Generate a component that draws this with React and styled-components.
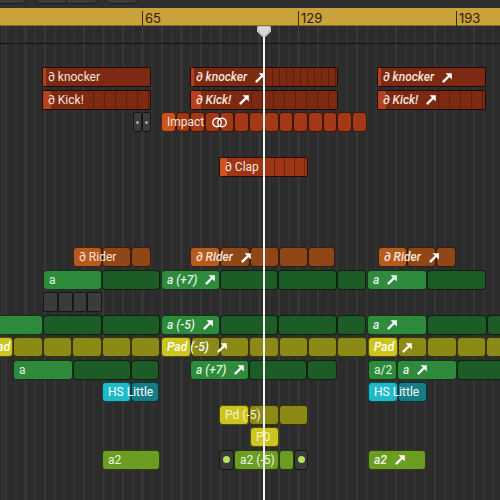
import React from 'react';
import styled, { createGlobalStyle, css } from 'styled-components';

const Global = createGlobalStyle`
  html, body { margin: 0; padding: 0; background: #2c2c2c; }
  body { font-family: Inter, "Liberation Sans", sans-serif; overflow: hidden; }
`;

const PAL = {
  red: { light: '#b6421c', dark: '#7c2a12', text: '#f7e4dc', line: 'rgba(40,8,2,0.35)' },
  clap: { light: '#d1501f', dark: '#9e3515', text: '#f7e4dc', line: 'rgba(40,8,2,0.4)' },
  impact: { light: '#cc521f', dark: '#a23815', text: '#f7e4dc' },
  rider: { light: '#b55b1f', dark: '#8f4718', text: '#f5e6dc' },
  green: { light: '#2d8b3b', dark: '#1d5b27', text: '#e2f3e2' },
  pad: { light: '#cdc51d', dark: '#8c8a17', text: '#ffffff' },
  cyan: { light: '#1fb9c7', dark: '#137e87', text: '#ffffff' },
  lime: { light: '#6b9d23', dark: '#6b9d23', text: '#eef6e2' },
  gray: { light: '#3b3b3b', dark: '#3b3b3b', text: '#fff' },
};

const Screen = styled.div`
  position: relative;
  width: 500px;
  height: 500px;
  overflow: hidden;
  display: flex;
  flex-direction: column;
  background: #2c2c2c;
`;

const TopBar = styled.div`
  height: 8px;
  flex-shrink: 0;
  background: #2f2f2f;
  display: flex;
  gap: 9px;
  align-items: flex-start;
`;

const ToolButton = styled.div`
  width: ${p => p.$w}px;
  margin-left: ${p => p.$ml || 0}px;
  height: 4px;
  box-sizing: border-box;
  background: #3a3a3a;
  border: 1px solid #1e1e1e;
  border-top: none;
  border-radius: 0 0 4px 4px;
  display: flex;
  justify-content: center;
`;

const ButtonDivider = styled.span`
  width: 1px;
  height: 100%;
  background: #1e1e1e;
`;

const Ruler = styled.div`
  position: relative;
  height: 18px;
  flex-shrink: 0;
  background: #c9a23b;
  box-shadow: inset 0 -1px 0 #8a6c22;
`;

const RulerMark = styled.div`
  position: absolute;
  left: ${p => p.$x}px;
  top: 3px;
  bottom: 0;
  border-left: 1px solid #3b2c0e;
  padding-left: 2px;
  font-size: 13px;
  line-height: 14px;
  color: #2a2008;
  font-weight: 400;
`;

const Arrange = styled.div`
  position: relative;
  flex: 1;
  display: flex;
  flex-direction: column;
  background-color: #2c2c2c;
  background-image:
    repeating-linear-gradient(90deg, #3d3d3d 0 1px, transparent 1px 39px),
    repeating-linear-gradient(90deg, #393939 0 1px, transparent 1px 9.75px);
  background-position: 5.5px 0, 5.5px 0;
`;

const GlobalLane = styled.div`
  height: 17px;
  flex-shrink: 0;
  border-bottom: 1px solid #141414;
`;

const Lane = styled.div`
  position: relative;
  height: 22.5px;
  flex-shrink: 0;
`;

const Clip = styled.div`
  position: absolute;
  top: 0.5px;
  left: ${p => p.$x}px;
  height: 20px;
  display: flex;
`;

const Seg = styled.div`
  position: relative;
  width: ${p => p.$w}px;
  height: 100%;
  box-sizing: border-box;
  background: ${p => p.$bg};
  border: 1px solid rgba(0, 0, 0, 0.6);
  border-radius: ${p => p.$r}px;
  display: flex;
  align-items: center;
  justify-content: center;
  flex-shrink: 0;
`;

const LoopClip = styled.div`
  position: absolute;
  top: 0.5px;
  left: ${p => p.$x}px;
  width: ${p => p.$w}px;
  height: 20px;
  box-sizing: border-box;
  border: 1px solid rgba(20, 4, 0, 0.85);
  border-radius: 2px;
  background-color: ${p => p.$bg};
  overflow: hidden;
`;

const Accent = styled.div`
  position: absolute;
  left: 0;
  top: 0;
  bottom: 0;
  width: ${p => p.$w}px;
  background: ${p => p.$bg};
`;

const LoopLines = styled.div`
  position: absolute;
  left: ${p => p.$from}px;
  top: 0;
  bottom: 0;
  right: 0;
  background-image: repeating-linear-gradient(90deg, ${p => p.$c} 0 1px, transparent 1px ${p => p.$step}px);
`;

const Label = styled.div`
  position: absolute;
  left: 5px;
  top: 0;
  height: 100%;
  display: flex;
  align-items: center;
  gap: 8px;
  white-space: nowrap;
  z-index: 2;
  font-family: Roboto, "Liberation Sans", sans-serif;
  font-size: 12px;
  font-weight: 400;
  color: ${p => p.$c};
  font-style: ${p => (p.$it ? 'italic' : 'normal')};
  pointer-events: none;
  ${p => p.$it && css`font-weight: 500;`}
`;

const Dot = styled.span`
  width: ${p => p.$s}px;
  height: ${p => p.$s}px;
  border-radius: 50%;
  background: ${p => p.$c};
`;

const PlayLine = styled.div`
  position: absolute;
  left: 263px;
  top: 26px;
  bottom: 0;
  width: 2px;
  background: #f4f4f4;
  z-index: 10;
`;

const PlayHead = styled.svg`
  position: absolute;
  left: 257px;
  top: 26px;
  z-index: 11;
`;

const Arrow = () => (
  <svg width="11" height="11" viewBox="0 0 11 11">
    <path d="M1.6 9.4 L7 4" stroke="#fff" strokeWidth="2.4" strokeLinecap="round" />
    <path d="M3.6 1.2 H9.8 V7.4 Z" fill="#fff" />
  </svg>
);

const Rings = () => (
  <svg width="15" height="11" viewBox="0 0 15 11">
    <circle cx="5" cy="5.5" r="4.2" fill="none" stroke="#fff" strokeWidth="1.4" />
    <circle cx="10" cy="5.5" r="4.2" fill="none" stroke="#fff" strokeWidth="1.4" />
  </svg>
);

const s = (w, t, label, o = {}) => ({ w, t, label, ...o });
const repeat = (n, w, t = 'd') => Array.from({ length: n }, () => s(w, t));

const LANES = [
  [],
  [
    { loop: true, pal: 'red', x: 42, w: 109, label: '∂ knocker', accent: 3 },
    { loop: true, pal: 'red', x: 190, w: 148, label: '∂ knocker', it: true, arr: true, accent: 3, lines: { from: 74, step: 7 } },
    { loop: true, pal: 'red', x: 377, w: 109, label: '∂ knocker', it: true, arr: true, accent: 3 },
  ],
  [
    { loop: true, pal: 'red', x: 42, w: 109, label: '∂ Kick!', accent: 8, lines: { from: 50, step: 11 } },
    { loop: true, pal: 'red', x: 190, w: 148, label: '∂ Kick!', it: true, arr: true, accent: 10, lines: { from: 60, step: 11 } },
    { loop: true, pal: 'red', x: 377, w: 109, label: '∂ Kick!', it: true, arr: true, accent: 8, lines: { from: 60, step: 11 } },
  ],
  [
    { pal: 'gray', x: 133, r: 2, segs: [s(9, 'd', null, { dot: '#7fb0ea', ds: 3 }), s(9, 'd', null, { dot: '#7fb0ea', ds: 3 })] },
    { pal: 'impact', x: 161, r: 4, segs: [s(14.7, 'l', 'Impact', { icon: 'rings' }), ...repeat(13, 14.7)] },
  ],
  [],
  [{ loop: true, pal: 'clap', x: 219, w: 89, label: '∂ Clap', accent: 7, lines: { from: 44, step: 10 } }],
  [],
  [],
  [],
  [
    { pal: 'rider', x: 73, segs: [s(29, 'l', '∂ Rider'), s(29, 'd'), s(20, 'd')] },
    { pal: 'rider', x: 190, segs: [s(30, 'l', '∂ Rider', { it: true, arr: true }), s(30, 'd'), s(29, 'd'), s(29, 'd'), s(27, 'd')] },
    { pal: 'rider', x: 378, segs: [s(29, 'l', '∂ Rider', { it: true, arr: true }), s(29, 'd'), s(20, 'd')] },
  ],
  [
    { pal: 'green', x: 43, segs: [s(59, 'l', 'a'), s(58, 'd')] },
    { pal: 'green', x: 161, segs: [s(59, 'l', 'a (+7)', { it: true, arr: true }), s(58, 'd'), s(59, 'd'), s(29, 'd')] },
    { pal: 'green', x: 367, segs: [s(60, 'l', 'a', { it: true, arr: true }), s(59, 'd')] },
  ],
  [{ pal: 'gray', x: 43, r: 2, segs: [s(15, 'd'), s(15, 'd'), s(14, 'd'), s(15, 'd')] }],
  [
    { pal: 'green', x: -16, segs: [s(59, 'l', 'a'), s(59, 'd'), s(58, 'd')] },
    { pal: 'green', x: 161, segs: [s(59, 'l', 'a (-5)', { it: true, arr: true }), s(58, 'd'), s(59, 'd'), s(29, 'd')] },
    { pal: 'green', x: 367, segs: [s(60, 'l', 'a', { it: true, arr: true }), s(60, 'd'), s(40, 'd')] },
  ],
  [
    { pal: 'pad', x: -16, segs: [s(29, 'l', 'Pad', { it: true }), s(30, 'd'), s(29, 'd'), s(30, 'd'), s(29, 'd'), s(29, 'd')] },
    { pal: 'pad', x: 161, segs: [s(29.5, 'l', 'Pad (-5)', { it: true, arr: true }), ...repeat(6, 29.4)] },
    { pal: 'pad', x: 368, segs: [s(29.5, 'l', 'Pad', { it: true, arr: true }), ...repeat(5, 29.5)] },
  ],
  [
    { pal: 'green', x: 13, segs: [s(60, 'l', 'a'), s(58, 'd'), s(28, 'd')] },
    { pal: 'green', x: 190, segs: [s(59, 'l', 'a (+7)', { it: true, arr: true }), s(58, 'd'), s(30, 'd')] },
    { pal: 'green', x: 368, segs: [s(29, 'l', 'a/2'), s(60, 'l', 'a', { it: true, arr: true }), s(60, 'd')] },
  ],
  [
    { pal: 'cyan', x: 102, segs: [s(29, 'l', 'HS Little'), s(28, 'd')] },
    { pal: 'cyan', x: 368, segs: [s(30, 'l', 'HS Little'), s(29, 'd')] },
  ],
  [{ pal: 'pad', x: 219, segs: [s(30, 'l', 'Pd (-5)', { c: '#f6f3d6' }), s(29.5, 'd'), s(29.5, 'd')] }],
  [{ pal: 'pad', x: 250, segs: [s(28.5, 'l', 'P0', { c: '#f6f3d6' })] }],
  [
    { pal: 'lime', x: 102, segs: [s(58, 'l', 'a2')] },
    {
      pal: 'lime', x: 219, segs: [
        s(15, 'g', null, { dot: '#b4e455', ds: 7 }),
        s(45, 'l', 'a2 (-5)'),
        s(15, 'l'),
        s(14, 'g', null, { dot: '#b4e455', ds: 7 }),
      ],
    },
    { pal: 'lime', x: 368, segs: [s(58, 'l', 'a2', { it: true, arr: true })] },
  ],
  [],
];

function LabelView({ text, it, arr, icon, color }) {
  return (
    <Label $c={color} $it={it}>
      <span>{text}</span>
      {icon === 'rings' && <Rings />}
      {arr && <Arrow />}
    </Label>
  );
}

function ClipView({ c }) {
  const pal = PAL[c.pal];
  if (c.loop) {
    return (
      <LoopClip $x={c.x} $w={c.w} $bg={pal.dark}>
        <Accent $w={c.accent} $bg={pal.light} />
        {c.lines && <LoopLines $from={c.lines.from} $step={c.lines.step} $c={pal.line} />}
        <LabelView text={c.label} it={c.it} arr={c.arr} color={pal.text} />
      </LoopClip>
    );
  }
  return (
    <Clip $x={c.x}>
      {c.segs.map((sg, i) => (
        <Seg
          key={i}
          $w={sg.w}
          $r={c.r ?? 4}
          $bg={sg.t === 'l' ? pal.light : sg.t === 'g' ? '#3a3a3a' : pal.dark}
        >
          {sg.dot && <Dot $s={sg.ds} $c={sg.dot} />}
          {sg.label && (
            <LabelView text={sg.label} it={sg.it} arr={sg.arr} icon={sg.icon} color={sg.c || pal.text} />
          )}
        </Seg>
      ))}
    </Clip>
  );
}

export default function App() {
  return (
    <>
      <Global />
      <Screen>
        <TopBar>
          <ToolButton $w={30} $ml={-4} />
          <ToolButton $w={62}>
            <ButtonDivider />
          </ToolButton>
          <ToolButton $w={31} />
        </TopBar>
        <Ruler>
          <RulerMark $x={142}>65</RulerMark>
          <RulerMark $x={298}>129</RulerMark>
          <RulerMark $x={456}>193</RulerMark>
        </Ruler>
        <Arrange>
          <GlobalLane />
          {LANES.map((clips, i) => (
            <Lane key={i}>
              {clips.map((c, j) => (
                <ClipView key={j} c={c} />
              ))}
            </Lane>
          ))}
        </Arrange>
        <PlayLine />
        <PlayHead width="14" height="12" viewBox="0 0 14 12">
          <path d="M1.5 0 H12.5 Q14 0 14 1.5 V5.5 L8 11.5 H6 L0 5.5 V1.5 Q0 0 1.5 0 Z" fill="#c9c9c9" />
          <path d="M2 1 H12 V5 L7 10 L2 5 Z" fill="#d8d8d8" />
        </PlayHead>
      </Screen>
    </>
  );
}
